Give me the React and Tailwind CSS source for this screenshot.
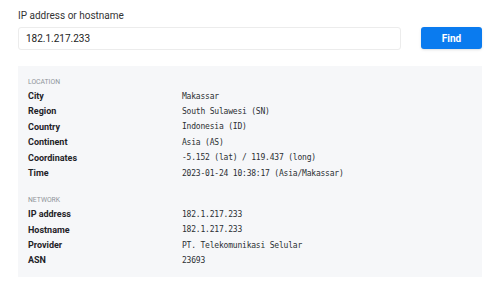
import React from "react";

const location = [
  ["City", "Makassar"],
  ["Region", "South Sulawesi (SN)"],
  ["Country", "Indonesia (ID)"],
  ["Continent", "Asia (AS)"],
  ["Coordinates", "-5.152 (lat) / 119.437 (long)"],
  ["Time", "2023-01-24 10:38:17 (Asia/Makassar)"],
];

const network = [
  ["IP address", "182.1.217.233"],
  ["Hostname", "182.1.217.233"],
  ["Provider", "PT. Telekomunikasi Selular"],
  ["ASN", "23693"],
];

const Section = ({ title, rows }) => (
  <div>
    <div className="text-[6.8px] leading-[10px] uppercase text-[#8f949a] mb-[2px]">{title}</div>
    {rows.map(([k, v]) => (
      <div key={k} className="flex h-[15.4px] items-center">
        <div className="w-[154px] text-[9px] font-bold text-[#1f2328]">{k}</div>
        <div className="text-[8px] tracking-[-0.2px] text-[#2b2f33]" style={{ fontFamily: "'DejaVu Sans Mono', monospace" }}>
          {v}
        </div>
      </div>
    ))}
  </div>
);

const App = () => {
  return (
    <div className="w-[500px] h-[288px] bg-white pl-[18px] pr-[18px] pt-[8px]" style={{ fontFamily: "Roboto, sans-serif" }}>
      <div className="text-[10px] leading-[16px] text-[#333]">IP address or hostname</div>
      <div className="flex gap-[20px] mt-[3px]">
        <div className="w-[383px] h-[23px] border border-[#ececec] rounded-[3px] flex items-center pl-[7px] text-[10px] text-[#222]">
          182.1.217.233
        </div>
        <button className="w-[61px] h-[22px] rounded-[3px] bg-[#0a7bef] text-white text-[10px] font-bold shadow-sm">
          Find
        </button>
      </div>
      <div className="mt-[16px] w-[464px] h-[211px] bg-[#f6f7f9] pl-[10px] pt-[11px] flex flex-col gap-[14px]">
        <Section title="Location" rows={location} />
        <Section title="Network" rows={network} />
      </div>
    </div>
  );
};

export default App;
